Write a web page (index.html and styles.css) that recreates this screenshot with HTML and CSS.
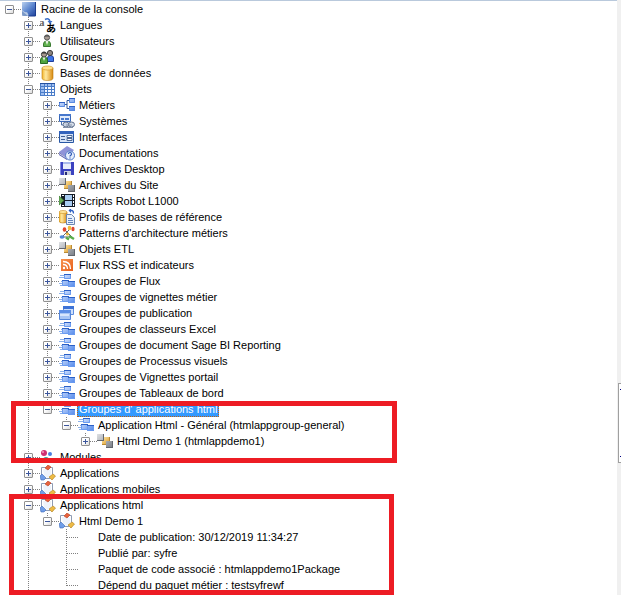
FILE: index.html
```html
<!DOCTYPE html>
<html lang="fr">
<head>
    <meta charset="UTF-8">
    <meta name="viewport" content="width=device-width, initial-scale=1.0">
    <title>Racine de la console</title>
    <link rel="stylesheet" href="styles.css">
</head>
<body>
    <svg class="sprite" aria-hidden="true">
        <defs>
            <linearGradient id="g-blue" x1="0" y1="0" x2="1" y2="1">
                <stop offset="0" stop-color="#dce9ff"/>
                <stop offset="1" stop-color="#4f86ea"/>
            </linearGradient>
            <linearGradient id="g-root" x1="0" y1="0" x2="1" y2="1">
                <stop offset="0" stop-color="#b9d0ee"/>
                <stop offset=".5" stop-color="#5c86cf"/>
                <stop offset="1" stop-color="#1d3f9a"/>
            </linearGradient>
            <linearGradient id="g-gold" x1="0" y1="0" x2="1" y2="0">
                <stop offset="0" stop-color="#f3b52c"/>
                <stop offset=".35" stop-color="#ffe9a0"/>
                <stop offset="1" stop-color="#d98a10"/>
            </linearGradient>
            <linearGradient id="g-cube" x1="0" y1="0" x2="1" y2="1">
                <stop offset="0" stop-color="#ffe7a6"/>
                <stop offset="1" stop-color="#dd9c2c"/>
            </linearGradient>
            <linearGradient id="g-grey" x1="0" y1="0" x2="1" y2="1">
                <stop offset="0" stop-color="#dfe1e4"/>
                <stop offset="1" stop-color="#7d828a"/>
            </linearGradient>
            <linearGradient id="g-rss" x1="0" y1="0" x2="1" y2="1">
                <stop offset="0" stop-color="#f7924e"/>
                <stop offset="1" stop-color="#e8601c"/>
            </linearGradient>

            <symbol id="i-root" viewBox="0 0 16 16">
                <path d="M1 1h14v14H7L1 10z" fill="url(#g-root)"/>
                <path d="M1 9q3 3 5 2l2 4H1z" fill="#b9cbe4"/>
                <path d="M1 10l6 5H3q-2 0-2-2z" fill="#7b99c8"/>
                <path d="M14.500 1v14H7" fill="none" stroke="#1c3d8e"/>
            </symbol>
            <symbol id="i-lang" viewBox="0 0 16 16">
                <text class="glyph-a" x="-1" y="9">a</text>
                <text class="glyph-jp" x="6" y="15">あ</text>
                <path d="M5 2.500q4-2 5 2" fill="none" stroke="#3a6fc9" stroke-width="1.500"/>
                <path d="M7.500 4h5L10 7z" fill="#3a6fc9"/>
            </symbol>
            <symbol id="i-user" viewBox="0 0 16 16">
                <path d="M3.500 13.500V11q0-3 3.500-3t3.500 3v2.500z" fill="#5fb04d" stroke="#3a7a32"/>
                <path d="M5.500 8h3L7 12z" fill="#e9f3e4"/>
                <circle cx="7" cy="4.500" r="2.600" fill="#a89c94" stroke="#5a5a5a"/>
                <path d="M4 4q3-4 6 0-3-1-6 0z" fill="#555"/>
            </symbol>
            <symbol id="i-users" viewBox="0 0 16 16">
                <path d="M7.500 12.500V9q0-2.500 3-2.500t3 2.500v3.500z" fill="#3d74e6" stroke="#1f3f9c"/>
                <circle cx="10" cy="4" r="2.600" fill="#8d8480" stroke="#3c3c3c"/>
                <path d="M.5 14.500V11q0-3 3.500-3t3.500 3v3.500z" fill="#4ea33e" stroke="#2b6b25"/>
                <path d="M2.500 8h3L4 12z" fill="#e9f3e4"/>
                <circle cx="4" cy="5.500" r="2.600" fill="#a99a90" stroke="#3c3c3c"/>
                <path d="M1 4.500q3-3 6 0z" fill="#333"/>
            </symbol>
            <symbol id="i-db" viewBox="0 0 16 16">
                <path d="M2 3v10q0 2.500 5.500 2.500T13 13V3z" fill="url(#g-gold)" stroke="#b87a12" stroke-width=".6"/>
                <ellipse cx="7.500" cy="3" rx="5.500" ry="2" fill="#ffe08a" stroke="#c98b1c" stroke-width=".6"/>
            </symbol>
            <symbol id="i-table" viewBox="0 0 16 16">
                <path d="M0 2h15v13H0z" fill="#4a7cc8"/>
                <path d="M0 2h15v1H0z" fill="#2450a0"/>
                <path d="M1 3h3v2H1zM5 3h2v2H5zM8 3h3v2H8zM12 3h2v2h-2zM1 6h3v2H1zM1 9h3v2H1zM1 12h3v2H1z" fill="#9dbdf0"/>
                <path d="M5 6h2v2H5zM8 6h3v2H8zM12 6h2v2h-2zM5 9h2v2H5zM8 9h3v2H8zM12 9h2v2h-2zM5 12h2v2H5zM8 12h3v2H8zM12 12h2v2h-2z" fill="#f4f8ff"/>
            </symbol>
            <symbol id="i-tree" viewBox="0 0 16 16">
                <path d="M5 7.500h3M8 3.500v8M8 3.500h2M8 11.500h2" stroke="#31589b" fill="none"/>
                <path d="M0 5h6v5H0zM10 1h6v5h-6zM10 9h6v5h-6z" fill="url(#g-blue)"/>
                <path d="M.5 5.500h5v4h-5zM10.500 1.500h5v4h-5zM10.500 9.500h5v4h-5z" fill="none" stroke="#5a8ae0"/>
                <path d="M0 5h6v1H0zM10 1h6v1h-6zM10 9h6v1h-6z" fill="#2f62c4"/>
            </symbol>
            <symbol id="i-system" viewBox="0 0 16 16">
                <path d="M.5 1.500h11v7H.5z" fill="#dfeafb" stroke="#3868b8"/>
                <path d="M0 1h12v2H0zM2 5h3v2H2zM6 5h4v2H6z" fill="#4677cc"/>
                <path d="M2.500 9v3h3" fill="none" stroke="#4d74ad"/>
                <ellipse cx="7" cy="11.500" rx="3" ry="2.500" fill="#c8d2e2" stroke="#5f718d"/>
                <ellipse cx="12.500" cy="11.500" rx="3" ry="2.500" fill="#d4dce8" stroke="#5f718d"/>
                <path d="M7 12h6M4 14.500h10" stroke="#8291a8"/>
            </symbol>
            <symbol id="i-form" viewBox="0 0 16 16">
                <path d="M.5 2.500h14v11H.5z" fill="#d5e3f8" stroke="#2857a4"/>
                <path d="M0 2h15v3H0z" fill="#3263bd"/>
                <path d="M2 7h4v1H2zM2 10h4v1H2z" fill="#3f5f94"/>
                <path d="M8 6.500h5v2H8zM8 9.500h5v2H8z" fill="#fff" stroke="#4d6895"/>
            </symbol>
            <symbol id="i-book" viewBox="0 0 16 16">
                <path d="M0 7l8-6 7 4-7 8z" fill="#8f93d8"/>
                <path d="M0 7l8 6v2L0 10z" fill="#5a5fae"/>
                <path d="M0 8.500l8 5 1-1" fill="none" stroke="#e7e8f8" stroke-width=".8"/>
                <circle cx="11" cy="10.500" r="4.500" fill="#e6eefc" stroke="#5079c6"/>
                <path d="M9.500 9q0-1.500 1.500-1.500T12.500 9q0 1-1.500 2v.5M11 12.500v1" fill="none" stroke="#2a55b4" stroke-width="1.200"/>
            </symbol>
            <symbol id="i-disk" viewBox="0 0 16 16">
                <path d="M1 1h14v13H2l-1-1z" fill="#3b42c0"/>
                <path d="M1 1h1v12H1z" fill="#8289e6"/>
                <path d="M4 1h8v7H4z" fill="#e9edfb"/>
                <path d="M4 1h8v2H4z" fill="#a9b9ec"/>
                <path d="M5 10h7v4H5z" fill="#c9cfdf"/>
                <path d="M6 11h2v3H6z" fill="#252b7a"/>
            </symbol>
            <symbol id="i-cubes" viewBox="0 0 16 16">
                <path d="M5 4h8v8H5z" fill="#b98a34"/>
                <path d="M5 4h7v7H5z" fill="url(#g-cube)"/>
                <path d="M0 1h7v7H0zM9 8h7v7H9z" fill="#62666d"/>
                <path d="M0 1h6v6H0zM9 8h6v6H9z" fill="url(#g-grey)"/>
            </symbol>
            <symbol id="i-film" viewBox="0 0 16 16">
                <path d="M2 1h14v13H2z" fill="#151d28"/>
                <path d="M6 2h7v5H6zM6 8h7v5H6z" fill="#a9cdf4"/>
                <path d="M3 2h2v1H3zM14 2h1v2h-1zM14 5h1v2h-1zM14 8h1v2h-1zM3 12h2v1H3zM14 11h1v2h-1z" fill="#fff"/>
                <path d="M0 3l5 4.500L0 12z" fill="#6cae5c" stroke="#3a7a34" stroke-width=".7"/>
            </symbol>
            <symbol id="i-dbref" viewBox="0 0 16 16">
                <path d="M0 3v9q0 2 4 2t4-2V3z" fill="url(#g-gold)" stroke="#b87a12" stroke-width=".6"/>
                <ellipse cx="4" cy="3" rx="4" ry="1.500" fill="#ffe69c" stroke="#c98b1c" stroke-width=".6"/>
                <path d="M7.500 5.500h5l3 3v7h-8z" fill="#e8f0fb" stroke="#6d87b0"/>
                <path d="M9 9.500h4M9 11.500h5M9 13.500h5" stroke="#6485bb"/>
                <path d="M11 1.500h1.500q2 0 2 3" fill="none" stroke="#2f62c4" stroke-width="1.300"/>
                <path d="M12-1v5L9.500 1.500z" fill="#2f62c4"/>
            </symbol>
            <symbol id="i-pattern" viewBox="0 0 16 16">
                <path d="M3 12l8-8M6 5l7 7M3 12h9" fill="none" stroke="#62676f"/>
                <ellipse cx="5.500" cy="4.500" rx="1.800" ry="2.300" fill="#e2472d"/>
                <ellipse cx="10.500" cy="3" rx="1.800" ry="2.300" fill="#f1bd3b"/>
                <ellipse cx="14" cy="4" rx="1.600" ry="2.200" fill="#e2472d"/>
                <ellipse cx="3" cy="12" rx="2.400" ry="1.800" fill="#4f87dc"/>
                <circle cx="8.500" cy="9" r="1.600" fill="#e8b43b"/>
                <path d="M7 12.500l3 2M10 11l5 3" stroke="#58ad4b" stroke-width="2.400"/>
            </symbol>
            <symbol id="i-rss" viewBox="0 0 16 16">
                <path d="M2 2h12v12H2z" fill="url(#g-rss)"/>
                <circle cx="5" cy="11" r="1.200" fill="#fff"/>
                <path d="M4 7.500q4.500 0 4.500 4.500M4 4.500q7.500 0 7.500 7.500" fill="none" stroke="#fff" stroke-width="1.300"/>
            </symbol>
            <symbol id="i-flow" viewBox="0 0 16 16">
                <path d="M1 2.500h5M0 4.500h6M2 8.500h2M0 10.500h4M1 12.500h4" stroke="#8db2ea"/>
                <path d="M5 1h7v5H5zM3 7h7v6H3zM9 8h7v6H9z" fill="url(#g-blue)"/>
                <path d="M5.500 1.500h6v4h-6zM3.500 7.500h6v5h-6zM9.500 8.500h6v5h-6z" fill="none" stroke="#6a9bf0"/>
                <path d="M5 1h7v1H5zM3 7h7v1H3zM9 8h7v1H9z" fill="#2b60c6"/>
            </symbol>
            <symbol id="i-windows" viewBox="0 0 16 16">
                <path d="M4.500 1.500h10v8h-10z" fill="#cfe0fa" stroke="#5c8ce0"/>
                <path d="M4 1h11v3H4z" fill="#3c72d6"/>
                <path d="M.5 5.500h11v9H.5z" fill="#a8c5f4" stroke="#5484d8"/>
                <path d="M0 5h12v3H0z" fill="#5c8ee6"/>
                <path d="M1 9h9v2H1z" fill="#d8e6fc"/>
            </symbol>
            <symbol id="i-module" viewBox="0 0 16 16">
                <circle cx="4" cy="4" r="3" fill="#cf2f72"/>
                <circle cx="3" cy="3" r="1" fill="#f0a0c0"/>
                <circle cx="10" cy="5" r="2" fill="#4a7ee0"/>
                <circle cx="6" cy="11" r="3" fill="#3aa0a0"/>
            </symbol>
            <symbol id="i-app" viewBox="0 0 16 16">
                <path d="M1.500 10V2.500h4M9.500 2.500h3V9M5 13.500h5" fill="none" stroke="#8f9cb4"/>
                <path d="M3 4h8v6l-3 3-4-2z" fill="#eef3fb"/>
                <path d="M5 3l3-3 3 2-3 3z" fill="#e8623c" stroke="#b23c1f" stroke-width=".6"/>
                <path d="M0 11l2-2 4 4-2 2H1z" fill="#6f9de8" stroke="#3c69b8" stroke-width=".6"/>
                <path d="M9 12l4-3 2.500 2-3.500 4z" fill="#eebb45" stroke="#a97817" stroke-width=".6"/>
            </symbol>
        </defs>
    </svg>

    <main class="console">
        <ul class="tree">
            <li>
                <div class="row"><button class="toggle open" type="button" aria-label="Réduire"></button><svg class="icon"><use href="#i-root"/></svg><span class="label">Racine de la console</span></div>
                <ul>
                    <li><div class="row"><button class="toggle" type="button" aria-label="Développer"></button><svg class="icon"><use href="#i-lang"/></svg><span class="label">Langues</span></div></li>
                    <li><div class="row"><button class="toggle" type="button" aria-label="Développer"></button><svg class="icon"><use href="#i-user"/></svg><span class="label">Utilisateurs</span></div></li>
                    <li><div class="row"><button class="toggle" type="button" aria-label="Développer"></button><svg class="icon"><use href="#i-users"/></svg><span class="label">Groupes</span></div></li>
                    <li><div class="row"><button class="toggle" type="button" aria-label="Développer"></button><svg class="icon"><use href="#i-db"/></svg><span class="label">Bases de données</span></div></li>
                    <li>
                        <div class="row"><button class="toggle open" type="button" aria-label="Réduire"></button><svg class="icon"><use href="#i-table"/></svg><span class="label">Objets</span></div>
                        <ul>
                            <li><div class="row"><button class="toggle" type="button" aria-label="Développer"></button><svg class="icon"><use href="#i-tree"/></svg><span class="label">Métiers</span></div></li>
                            <li><div class="row"><button class="toggle" type="button" aria-label="Développer"></button><svg class="icon"><use href="#i-system"/></svg><span class="label">Systèmes</span></div></li>
                            <li><div class="row"><button class="toggle" type="button" aria-label="Développer"></button><svg class="icon"><use href="#i-form"/></svg><span class="label">Interfaces</span></div></li>
                            <li><div class="row"><button class="toggle" type="button" aria-label="Développer"></button><svg class="icon"><use href="#i-book"/></svg><span class="label">Documentations</span></div></li>
                            <li><div class="row"><button class="toggle" type="button" aria-label="Développer"></button><svg class="icon"><use href="#i-disk"/></svg><span class="label">Archives Desktop</span></div></li>
                            <li><div class="row"><button class="toggle" type="button" aria-label="Développer"></button><svg class="icon"><use href="#i-cubes"/></svg><span class="label">Archives du Site</span></div></li>
                            <li><div class="row"><button class="toggle" type="button" aria-label="Développer"></button><svg class="icon"><use href="#i-film"/></svg><span class="label">Scripts Robot L1000</span></div></li>
                            <li><div class="row"><button class="toggle" type="button" aria-label="Développer"></button><svg class="icon"><use href="#i-dbref"/></svg><span class="label">Profils de bases de référence</span></div></li>
                            <li><div class="row"><button class="toggle" type="button" aria-label="Développer"></button><svg class="icon"><use href="#i-pattern"/></svg><span class="label">Patterns d'architecture métiers</span></div></li>
                            <li><div class="row"><button class="toggle" type="button" aria-label="Développer"></button><svg class="icon"><use href="#i-cubes"/></svg><span class="label">Objets ETL</span></div></li>
                            <li><div class="row"><button class="toggle" type="button" aria-label="Développer"></button><svg class="icon"><use href="#i-rss"/></svg><span class="label">Flux RSS et indicateurs</span></div></li>
                            <li><div class="row"><button class="toggle" type="button" aria-label="Développer"></button><svg class="icon"><use href="#i-flow"/></svg><span class="label">Groupes de Flux</span></div></li>
                            <li><div class="row"><button class="toggle" type="button" aria-label="Développer"></button><svg class="icon"><use href="#i-flow"/></svg><span class="label">Groupes de vignettes métier</span></div></li>
                            <li><div class="row"><button class="toggle" type="button" aria-label="Développer"></button><svg class="icon"><use href="#i-windows"/></svg><span class="label">Groupes de publication</span></div></li>
                            <li><div class="row"><button class="toggle" type="button" aria-label="Développer"></button><svg class="icon"><use href="#i-flow"/></svg><span class="label">Groupes de classeurs Excel</span></div></li>
                            <li><div class="row"><button class="toggle" type="button" aria-label="Développer"></button><svg class="icon"><use href="#i-flow"/></svg><span class="label">Groupes de document Sage BI Reporting</span></div></li>
                            <li><div class="row"><button class="toggle" type="button" aria-label="Développer"></button><svg class="icon"><use href="#i-flow"/></svg><span class="label">Groupes de Processus visuels</span></div></li>
                            <li><div class="row"><button class="toggle" type="button" aria-label="Développer"></button><svg class="icon"><use href="#i-flow"/></svg><span class="label">Groupes de Vignettes portail</span></div></li>
                            <li><div class="row"><button class="toggle" type="button" aria-label="Développer"></button><svg class="icon"><use href="#i-flow"/></svg><span class="label">Groupes de Tableaux de bord</span></div></li>
                            <li>
                                <div class="row"><button class="toggle open" type="button" aria-label="Réduire"></button><svg class="icon"><use href="#i-flow"/></svg><span class="label selected">Groupes d' applications html</span></div>
                                <ul>
                                    <li>
                                        <div class="row"><button class="toggle open" type="button" aria-label="Réduire"></button><svg class="icon"><use href="#i-flow"/></svg><span class="label">Application Html - Général (htmlappgroup-general)</span></div>
                                        <ul>
                                            <li><div class="row"><button class="toggle" type="button" aria-label="Développer"></button><svg class="icon"><use href="#i-cubes"/></svg><span class="label">Html Demo 1 (htmlappdemo1)</span></div></li>
                                        </ul>
                                    </li>
                                </ul>
                            </li>
                        </ul>
                    </li>
                    <li><div class="row"><button class="toggle" type="button" aria-label="Développer"></button><svg class="icon"><use href="#i-module"/></svg><span class="label">Modules</span></div></li>
                    <li><div class="row"><button class="toggle" type="button" aria-label="Développer"></button><svg class="icon"><use href="#i-app"/></svg><span class="label">Applications</span></div></li>
                    <li><div class="row"><button class="toggle" type="button" aria-label="Développer"></button><svg class="icon"><use href="#i-app"/></svg><span class="label">Applications mobiles</span></div></li>
                    <li class="more">
                        <div class="row"><button class="toggle open" type="button" aria-label="Réduire"></button><svg class="icon"><use href="#i-app"/></svg><span class="label">Applications html</span></div>
                        <ul>
                            <li>
                                <div class="row"><button class="toggle open" type="button" aria-label="Réduire"></button><svg class="icon"><use href="#i-app"/></svg><span class="label">Html Demo 1</span></div>
                                <ul>
                                    <li><div class="row leaf"><span class="label">Date de publication: 30/12/2019 11:34:27</span></div></li>
                                    <li><div class="row leaf"><span class="label">Publié par: syfre</span></div></li>
                                    <li><div class="row leaf"><span class="label">Paquet de code associé : htmlappdemo1Package</span></div></li>
                                    <li><div class="row leaf"><span class="label">Dépend du paquet métier : testsyfrewf</span></div></li>
                                </ul>
                            </li>
                        </ul>
                    </li>
                </ul>
            </li>
        </ul>
        <div class="mark mark-groups"></div>
        <div class="mark mark-apps"></div>
    </main>
    <div class="splitter"><div class="grip"></div></div>
</body>
</html>
```
FILE: styles.css
```css
* {
    box-sizing: border-box;
}
html, body {
    margin: 0;
}
body {
    display: flex;
    height: 100vh;
    overflow: hidden;
    background: #fff;
    color: #000;
    font-family: "Liberation Sans", Arial, sans-serif;
    font-size: 11px;
    line-height: 16px;
}
.sprite {
    position: absolute;
    width: 0;
    height: 0;
}
.glyph-a {
    font: bold 11px "Liberation Serif", serif;
    fill: #666;
}
.glyph-jp {
    font: bold 10px "Noto Sans CJK JP", sans-serif;
    fill: #000;
}
.console {
    position: relative;
    flex: 1;
    border-top: 1px solid #b9c9dc;
}
ul {
    list-style: none;
    margin: 0;
    padding: 0;
}
ul ul {
    padding-left: 19px;
}
/* vertical dotted line of the branch */
ul ul > li {
    background: repeating-linear-gradient(#808080 0 1px, transparent 1px 2px) 9px 0 / 1px 100% no-repeat;
}
ul ul > li:last-child {
    background-size: 1px 9px;
}
ul ul > li.more {
    background-size: 1px 100%;
}
.row {
    display: flex;
    align-items: center;
    height: 16px;
    padding-left: 5px;
    white-space: nowrap;
    background: repeating-linear-gradient(90deg, #808080 0 1px, transparent 1px 2px) 10px 8px / 11px 1px no-repeat;
}
.toggle {
    flex: none;
    width: 9px;
    height: 9px;
    margin: 0 7px 0 0;
    padding: 0;
    border: 1px solid #919191;
    border-radius: 1px;
    background:
        linear-gradient(#3c569c, #3c569c) center / 5px 1px no-repeat,
        linear-gradient(#3c569c, #3c569c) center / 1px 5px no-repeat,
        linear-gradient(135deg, #fff 40%, #dcdcdc);
}
.toggle.open {
    background:
        linear-gradient(#3c569c, #3c569c) center / 5px 1px no-repeat,
        linear-gradient(135deg, #fff 40%, #dcdcdc);
}
.icon {
    flex: none;
    width: 16px;
    height: 16px;
    margin-right: 2px;
    overflow: visible;
}
.label {
    padding: 0 2px;
}
.selected {
    background: #3399ff;
    color: #fff;
    outline: 1px dotted #c06010;
    outline-offset: -1px;
}
.leaf {
    padding-left: 39px;
}
/* red frames over the tree */
.mark {
    position: absolute;
    border: 5px solid #ed1c24;
}
.mark-groups {
    top: 400px;
    left: 11px;
    width: 386px;
    height: 62px;
}
.mark-apps {
    top: 493px;
    left: 9px;
    width: 385px;
    height: 101px;
}
.splitter {
    display: flex;
    flex: none;
    align-items: flex-start;
    width: 4px;
    overflow: hidden;
    padding: 383px 0 0 1px;
    background: #f0f0f0;
}
.grip {
    flex: none;
    width: 8px;
    height: 80px;
    border: 1px solid #a0a0a0;
    background:
        linear-gradient(#000080, #000080) 1px 5px / 4px 1px no-repeat,
        linear-gradient(#000080, #000080) 1px 72px / 4px 1px no-repeat,
        #fff;
}
```
